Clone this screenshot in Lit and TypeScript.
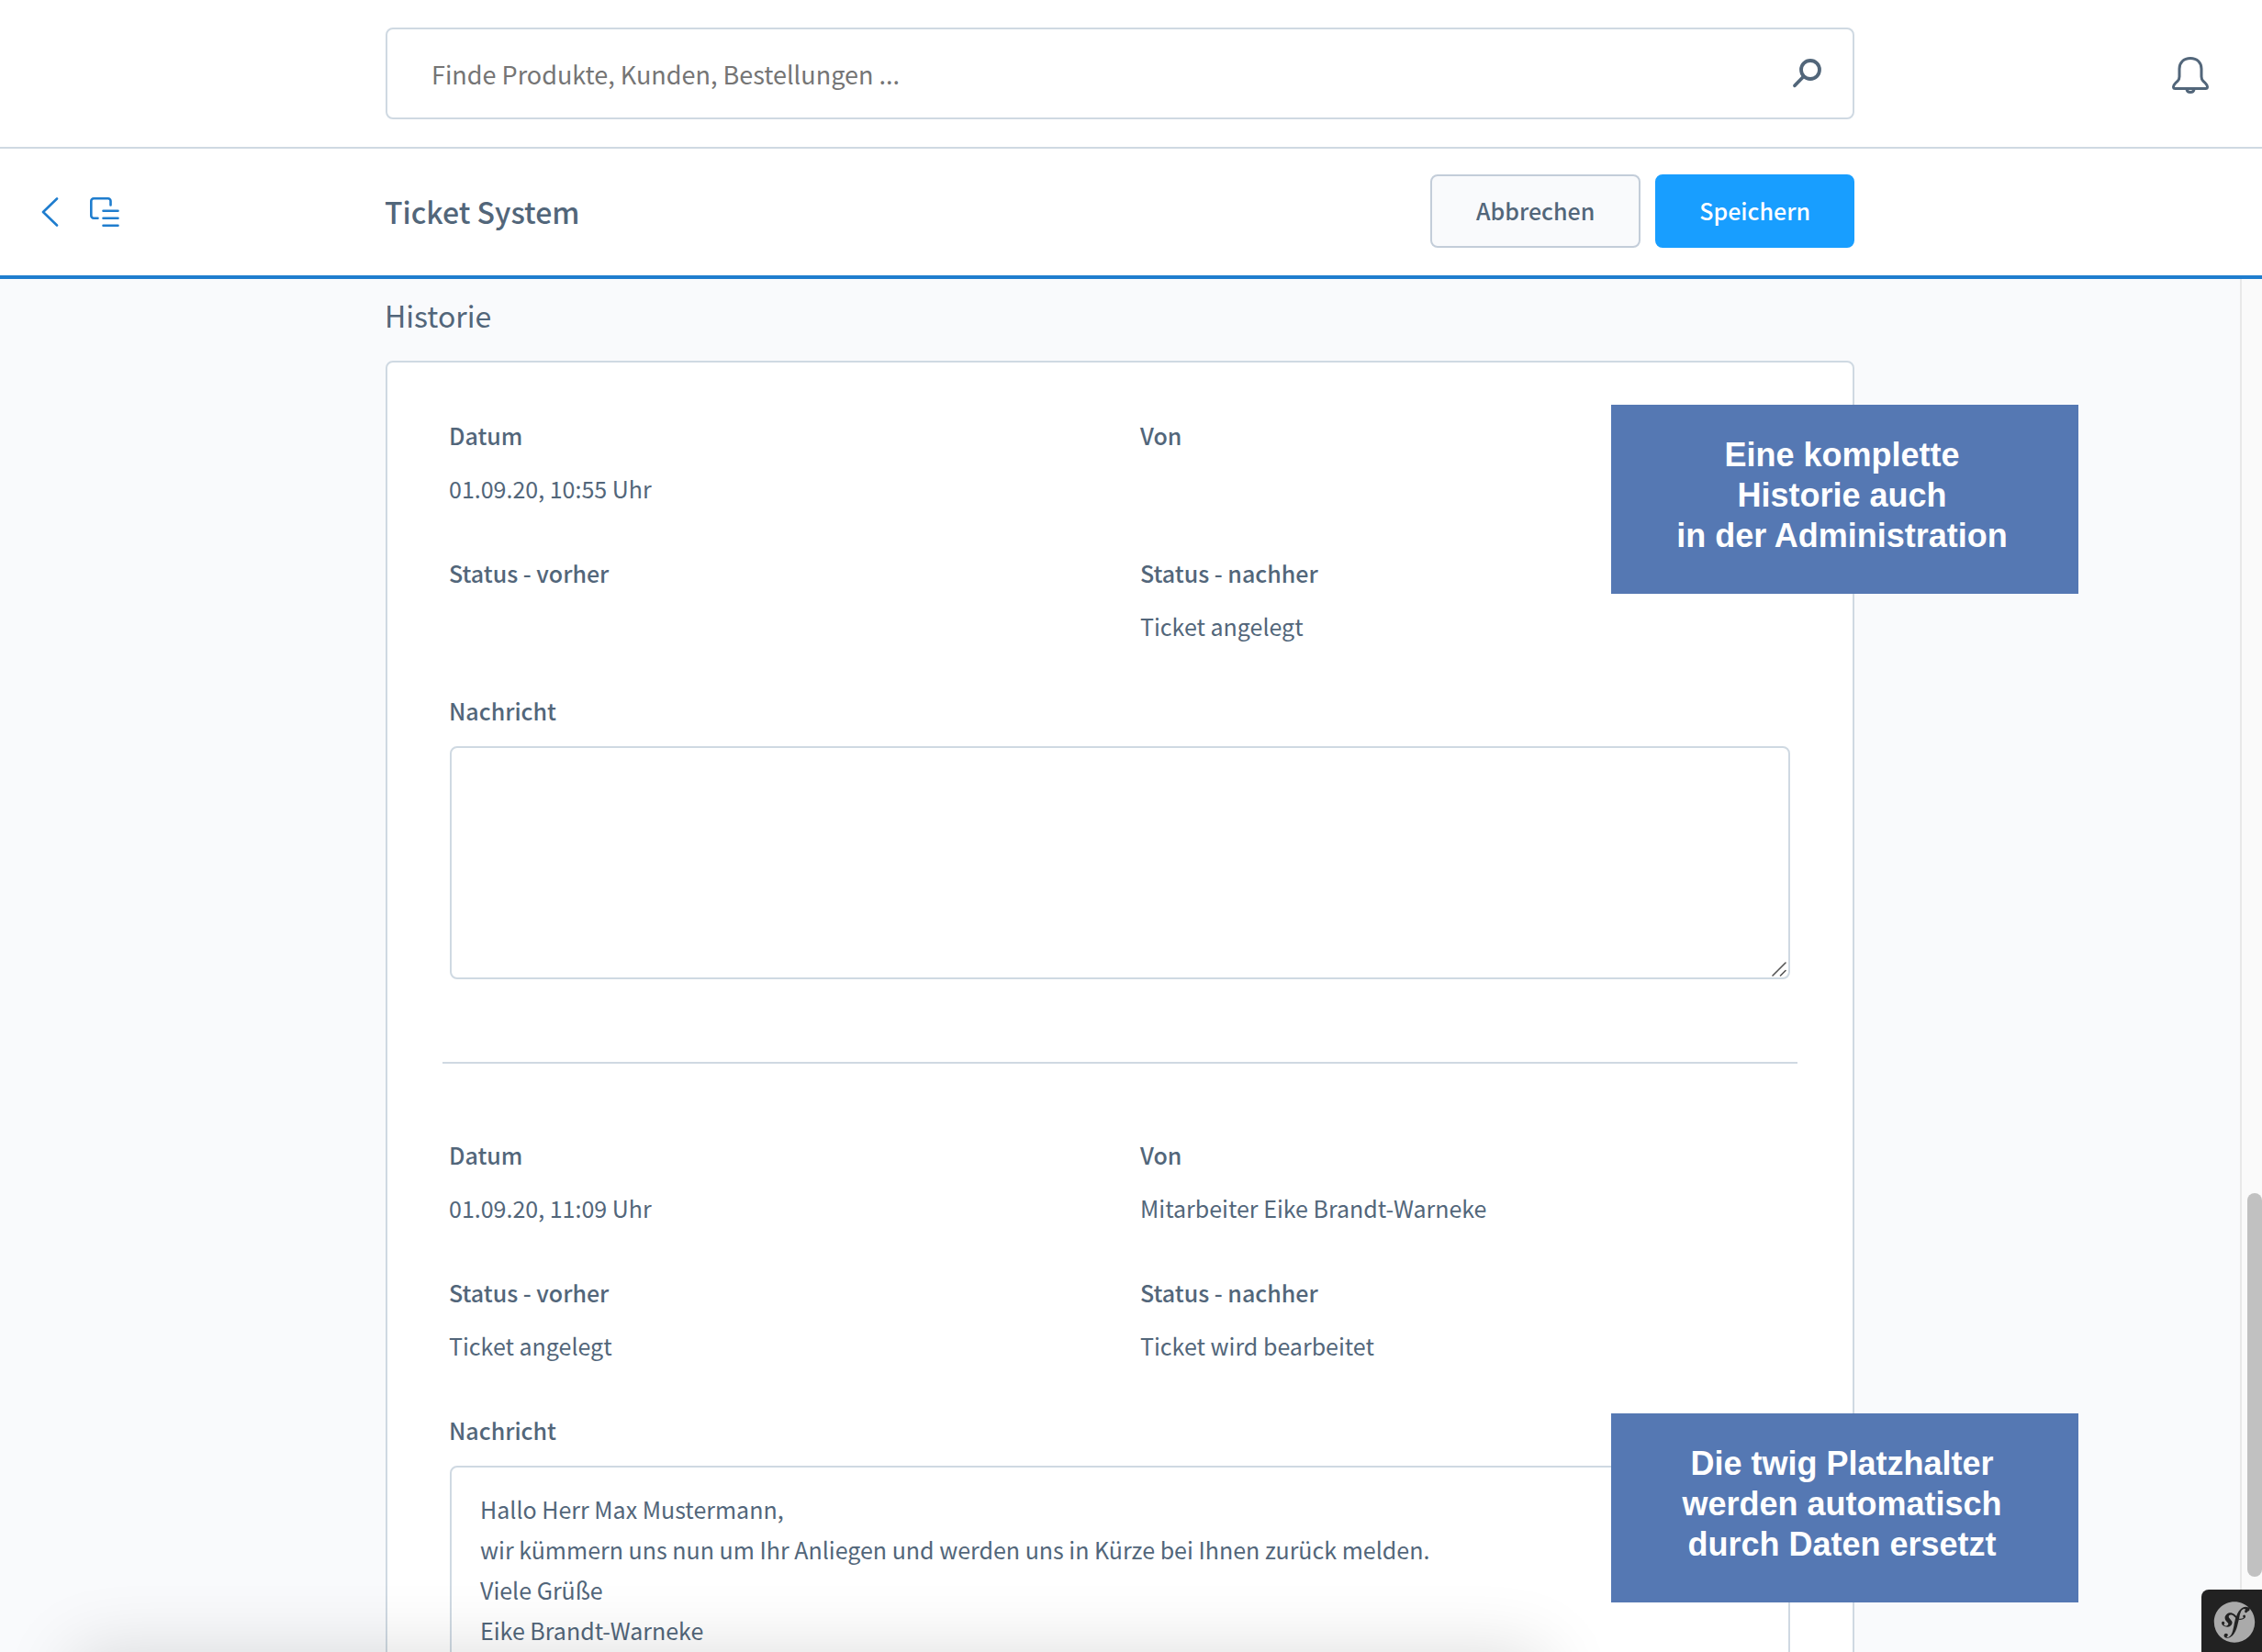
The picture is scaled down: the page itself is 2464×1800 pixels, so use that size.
import { LitElement, html, css, svg } from "lit";
import { customElement, property } from "lit/decorators.js";
import { classMap } from "lit/directives/class-map.js";

interface HistoryEntry {
  id: string;
  date: string;
  from: string;
  before: string;
  after: string;
  message: string;
  note: string[];
  noteAtMessage: boolean;
}

const ENTRIES: HistoryEntry[] = [
  {
    id: "entry-1",
    date: "01.09.20, 10:55 Uhr",
    from: "",
    before: "",
    after: "Ticket angelegt",
    message: "",
    note: ["Eine komplette", "Historie auch", "in der Administration"],
    noteAtMessage: false,
  },
  {
    id: "entry-2",
    date: "01.09.20, 11:09 Uhr",
    from: "Mitarbeiter Eike Brandt-Warneke",
    before: "Ticket angelegt",
    after: "Ticket wird bearbeitet",
    message:
      "Hallo Herr Max Mustermann,\nwir kümmern uns nun um Ihr Anliegen und werden uns in Kürze bei Ihnen zurück melden.\nViele Grüße\nEike Brandt-Warneke",
    note: ["Die twig Platzhalter", "werden automatisch", "durch Daten ersetzt"],
    noteAtMessage: true,
  },
];

const stroke = (size: number, body: unknown, width = 3) => html`
  <svg width=${size} height=${size} viewBox="0 0 ${size} ${size}" fill="none" stroke="currentColor"
    stroke-width=${width} stroke-linecap="round" stroke-linejoin="round" aria-hidden="true">${body}</svg>`;

const backIcon = stroke(32, svg`<path d="M24 1.5 9 16l15 14.500"/>`, 2.6);
const listIcon = stroke(
  32,
  svg`<path d="M22.500 8.500V4a2.700 2.700 0 0 0-2.700-2.700H4A2.700 2.700 0 0 0 1.300 4v16A2.700 2.700 0 0 0 4 22.700H8.500M14.500 14.700h16M14.500 22.700h16M14.500 30.700h16"/>`,
  2.6
);
const searchIcon = stroke(
  32,
  svg`<circle cx="20" cy="12" r="10"/><path d="M12.500 19.500 3 29.300"/>`,
  3.8
);
const bellIcon = stroke(
  40,
  svg`<path d="M20 1.500C12.500 1.500 8 6.500 8 13v8.500c0 2-.7 3.600-2 4.900l-2.200 2.100C2.300 30 1.500 31.300 1.500 32.500c0 1.300.8 2 2 2h33c1.200 0 2-.7 2-2 0-1.200-.8-2.500-2.300-4L34 26.400c-1.300-1.300-2-2.900-2-4.900V13C32 6.500 27.500 1.500 20 1.500zM16 35.500c.3 1.900 1.900 3 4 3s3.700-1.100 4-3"/>`,
  3
);
const gripIcon = stroke(16, svg`<path d="M1 15 15 1M9.500 15 15 9.500"/>`, 1.6);

@customElement("history-entry")
export class HistoryEntryElement extends LitElement {
  @property({ attribute: false }) entry!: HistoryEntry;

  static styles = css`
    :host {
      display: block;
      position: relative;
      padding: 0 68px;
    }
    .fields {
      display: grid;
      grid-template-columns: 1fr 1fr;
      gap: 60px 44px;
      margin: 0 -1px 60px;
    }
    .field {
      display: grid;
      gap: 26px;
    }
    dt,
    dd,
    .label {
      margin: 0;
      min-height: 32px;
      font-size: 25px;
      line-height: 32px;
    }
    dt,
    .label {
      font-weight: 500;
    }
    .label {
      display: block;
      margin: 0 -1px 23px;
    }
    .box {
      position: relative;
      display: flex;
    }
    textarea {
      box-sizing: border-box;
      width: 100%;
      min-height: 254px;
      padding: 23px 31px;
      border: 2px solid #cfd9e2;
      border-radius: 8px;
      background: transparent;
      color: inherit;
      font: inherit;
      font-size: 25px;
      line-height: 44px;
      resize: none;
      outline: none;
    }
    .grip {
      position: absolute;
      right: 4px;
      bottom: 3px;
      display: flex;
      color: #555;
    }
    .note {
      position: absolute;
      top: -17px;
      right: -246px;
      box-sizing: border-box;
      width: 509px;
      margin: 0;
      padding: 33px 6px 41px 0;
      background: #5578b3;
      color: #fff;
      font: bold 36px/44px "Liberation Sans", sans-serif;
      text-align: center;
    }
    .note.at-message {
      top: 298px;
    }
    .line {
      display: block;
    }
  `;

  render() {
    const e = this.entry;
    const rows = [
      ["Datum", e.date],
      ["Von", e.from],
      ["Status - vorher", e.before],
      ["Status - nachher", e.after],
    ];
    return html`
      <dl class="fields">
        ${rows.map(([name, value]) => html`<div class="field"><dt>${name}</dt><dd>${value}</dd></div>`)}
      </dl>
      <label class="label" for=${e.id}>Nachricht</label>
      <div class="box">
        <textarea id=${e.id} .value=${e.message}></textarea>
        <span class="grip">${gripIcon}</span>
      </div>
      <p class=${classMap({ note: true, "at-message": e.noteAtMessage })}>
        ${e.note.map((line) => html`<span class="line">${line}</span>`)}
      </p>
    `;
  }
}

@customElement("app-root")
export class AppRoot extends LitElement {
  static styles = css`
    :host {
      position: relative;
      display: flex;
      flex-direction: column;
      height: 100vh;
      overflow: hidden;
      background: #f9fafc;
      color: #52667a;
      font-family: "Noto Sans CJK SC", "Noto Sans", sans-serif;
    }
    .bar {
      display: grid;
      grid-template-columns: 1fr minmax(0, 1600px) 1fr;
      align-items: center;
      padding-right: 24px;
      background: #fff;
    }
    .top {
      border-bottom: 2px solid #cfd9e2;
    }
    .page {
      border-bottom: 4px solid #1f7dce;
    }
    .search {
      display: flex;
      align-items: center;
      grid-column: 2;
      margin: 30px 0;
      padding: 0 34px 0 48px;
      border: 2px solid #cfd9e2;
      border-radius: 8px;
    }
    .search input {
      flex: 1;
      min-width: 0;
      height: 96px;
      padding: 0;
      border: 0;
      outline: none;
      background: none;
      color: inherit;
      font: inherit;
      font-size: 27px;
    }
    .search input::placeholder {
      color: #757575;
      opacity: 1;
    }
    .icon {
      display: flex;
      padding: 0;
      border: 0;
      background: none;
      color: inherit;
      text-decoration: none;
    }
    .bell {
      justify-self: end;
      margin-right: 34px;
      padding-top: 4px;
    }
    .nav {
      display: flex;
      gap: 28px;
      padding-left: 38px;
      color: #1f7dce;
    }
    .head {
      display: flex;
      align-items: center;
      gap: 16px;
      padding: 28px 0 30px;
    }
    h1 {
      flex: 1;
      margin: 0 0 0 -1px;
      font-size: 32px;
      font-weight: 500;
      line-height: 48px;
    }
    .btn {
      box-sizing: border-box;
      height: 80px;
      padding: 0 48px 2px;
      border: 2px solid #c3cdd9;
      border-radius: 8px;
      background: #f9fafc;
      color: inherit;
      font: inherit;
      font-size: 25px;
      font-weight: 500;
    }
    .primary {
      padding: 0 46px 2px;
      border-color: #189eff;
      background: #189eff;
      color: #fff;
    }
    .body {
      display: flex;
      flex: 1;
      min-height: 0;
      overflow: hidden;
    }
    main {
      display: grid;
      flex: 1;
      grid-template-columns: 1fr minmax(0, 1600px) 1fr;
      align-items: start;
    }
    .history {
      grid-column: 2;
    }
    h2 {
      margin: 0 0 0 -1px;
      padding: 15px 0 26px;
      font-size: 32px;
      font-weight: 400;
      line-height: 48px;
    }
    .card {
      padding: 63px 0;
      border: 2px solid #cfd9e2;
      border-radius: 8px;
      background: #fff;
    }
    hr {
      height: 2px;
      margin: 90px 60px 83px;
      border: 0;
      background: #cfd9e2;
    }
    .track {
      display: flex;
      flex-direction: column;
      align-items: flex-end;
      box-sizing: border-box;
      width: 24px;
      border-left: 2px solid #e8e8e8;
      background: #fafafa;
    }
    .track::before {
      content: "";
      flex: 996;
    }
    .track::after {
      content: "";
      flex: 82;
    }
    .thumb {
      flex: 418;
      width: 16px;
      border-radius: 8px;
      background: #c1c1c1;
    }
    .shade {
      position: absolute;
      top: 100%;
      left: 80px;
      width: 65%;
      height: 120px;
      box-shadow: 0 0 80px rgba(0, 0, 0, 0.14);
      pointer-events: none;
    }
    .debug {
      position: absolute;
      right: 0;
      bottom: 0;
      padding: 12px 7px 9px 13px;
      border-radius: 8px 0 0 0;
      background: #222;
    }
  `;

  render() {
    return html`
      <header class="bar top">
        <div class="search" role="search">
          <input type="text" aria-label="Suche" placeholder="Finde Produkte, Kunden, Bestellungen ..." />
          <button class="icon" aria-label="Suchen">${searchIcon}</button>
        </div>
        <button class="icon bell" aria-label="Benachrichtigungen">${bellIcon}</button>
      </header>
      <div class="bar page">
        <nav class="nav">
          <a class="icon" href="#" aria-label="Zurück">${backIcon}</a>
          <a class="icon" href="#" aria-label="Übersicht">${listIcon}</a>
        </nav>
        <div class="head">
          <h1>Ticket System</h1>
          <button class="btn">Abbrechen</button>
          <button class="btn primary">Speichern</button>
        </div>
      </div>
      <div class="body">
        <main>
          <section class="history">
            <h2>Historie</h2>
            <div class="card">
              ${ENTRIES.map((entry, i) => html`${i ? html`<hr />` : ""}<history-entry .entry=${entry}></history-entry>`)}
            </div>
          </section>
        </main>
        <div class="track"><div class="thumb"></div></div>
      </div>
      <div class="shade"></div>
      <button class="icon debug" aria-label="Symfony">
        <svg width="46" height="47" viewBox="0.5 0.5 23 23" fill="#aaa" aria-hidden="true">
          <path d="M12 .9C5.800.9.9 5.800.9 12a11.100 11.100 0 1 0 22.200 0C23.100 5.800 18.200.9 12 .9zm6.500 6c-.6 0-.9-.3-.9-.8 0-.2 0-.4.2-.6l.2-.4c0-.3-.5-.4-.6-.4-1.800.1-2.300 2.500-2.700 4.400l-.2 1c1 .2 1.800 0 2.200-.3.6-.4-.2-.7-.1-1.200.1-.3.5-.5.7-.6.5 0 .7.5.7.9 0 .7-1 1.800-3 1.800l-.6-.1-.6 2.400c-.4 1.600-.8 3.800-2.400 5.700-1.400 1.700-2.900 1.900-3.500 1.900-1.200 0-1.600-.6-1.600-1.300 0-.8.7-1.200 1.100-1.200.6 0 1 .4 1 .9 0 .3-.1.5-.3.6-.1.1-.3.2-.3.3 0 .1.100.3.400.3.500 0 .9-.3 1.200-.5 1.300-1 1.700-2.900 2.400-6.200l.1-.8.7-3.100c-.8-.6-1.200-1.300-2.200-1.600-.6-.1-1 0-1.300.4-.4.4-.2 1 .1 1.400l.6.7c.7.800 1.100 1.200.9 2.100-.2 1.400-1.800 2.400-3.800 1.800-1.700-.5-2-1.700-1.800-2.300.1-.5.5-.6.9-.5.4.1.7.6.6 1l-.1.3c-.1.1-.2.2-.2.4-.1.4.4.6.7.7.7.2 1.400-.2 1.600-.7.2-.5-.1-.8-.2-.9l-.7-.8c-.4-.4-1.200-1.400-.8-2.700.2-.5.5-1 .9-1.300.9-.7 1.900-.8 2.800-.6 1.200.4 1.800 1.100 2.500 1.800.4-1.300 1-2.600 1.900-3.500.8-1 1.900-1.600 3.100-1.700 1.200 0 2.200.5 2.200 1.300 0 .4-.2 1.100-.9 1.100z"/>
        </svg>
      </button>
    `;
  }
}
